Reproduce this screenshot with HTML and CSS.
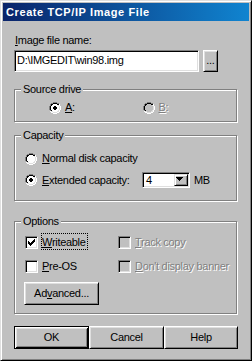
FILE: index.html
```html
<!DOCTYPE html>
<html lang="en">

<head>
    <meta charset="UTF-8">
    <meta name="viewport" content="width=device-width, initial-scale=1.0">
    <title>Create TCP/IP Image File</title>
    <link rel="stylesheet" href="styles.css">
</head>

<body>
    <!-- Pixel sprites for the classic radio / check glyphs -->
    <svg class="sprites" width="0" height="0">
        <symbol id="radio" viewBox="0 0 12 12">
            <path fill="#808080" d="M4 0h4v1H4zM2 1h2v1H2zM8 1h2v1H8zM1 2h1v2H1zM0 4h1v4H0zM1 8h1v1H1z" />
            <path fill="#000" d="M4 1h4v1H4zM2 2h2v1H2zM8 2h2v1H8zM2 3h1v1H2zM1 4h1v4H1zM2 8h1v1H2z" />
            <path fill="#dfdfdf" d="M9 3h1v1H9zM10 4h1v4h-1zM9 8h1v1H9zM2 9h2v1H2zM8 9h2v1H8zM4 10h4v1H4z" />
            <path fill="#fff" d="M10 2h1v2h-1zM11 4h1v4h-1zM10 8h1v2h-1zM1 9h1v1H1zM2 10h2v1H2zM8 10h2v1H8zM4 11h4v1H4z" />
            <path d="M4 2h4v1h1v1h1v4h-1v1h-1v1H4v-1H3V8H2V4h1V3h1z" />
        </symbol>
        <symbol id="dot" viewBox="0 0 12 12">
            <path fill="#000" d="M5 4h2v1h1v2h-1v1H5V7H4V5h1z" />
        </symbol>
        <symbol id="check" viewBox="0 0 7 7">
            <path fill="#000" d="M6 0h1v1H6zM5 1h2v1H5zM0 2h1v1H0zM4 2h3v1H4zM0 3h2v1H0zM3 3h3v1H3zM0 4h5v1H0zM1 5h3v1H1zM2 6h1v1H2z" />
        </symbol>
    </svg>

    <div class="window">
        <div class="titlebar">Create TCP/IP Image File</div>

        <div class="client">
            <div class="label"><u>I</u>mage file name:</div>
            <div class="file-row">
                <div class="field">D:\IMGEDIT\win98.img</div>
                <div class="btn browse">...</div>
            </div>

            <fieldset class="group source">
                <legend>Source drive</legend>
                <div class="drives">
                    <div class="choice drive">
                        <svg class="radio-ico" viewBox="0 0 12 12"><use href="#radio" /><use href="#dot" /></svg>
                        <span><u>A</u>:</span>
                    </div>
                    <div class="choice drive disabled">
                        <svg class="radio-ico" viewBox="0 0 12 12"><use href="#radio" /></svg>
                        <span><u>B</u>:</span>
                    </div>
                </div>
            </fieldset>

            <fieldset class="group capacity">
                <legend>Capacity</legend>
                <div class="choice indent">
                    <svg class="radio-ico" viewBox="0 0 12 12"><use href="#radio" /></svg>
                    <span><u>N</u>ormal disk capacity</span>
                </div>
                <div class="choice indent extended">
                    <svg class="radio-ico" viewBox="0 0 12 12"><use href="#radio" /><use href="#dot" /></svg>
                    <span class="ext-label"><u>E</u>xtended capacity:</span>
                    <div class="combo">
                        <span class="combo-value">4</span>
                        <span class="combo-arrow">
                            <svg width="7" height="4" viewBox="0 0 7 4"><path fill="#000" d="M0 0h7v1h-1v1h-1v1h-1v1h-1v-1h-1v-1h-1v-1H0z" /></svg>
                        </span>
                    </div>
                    <span class="unit">MB</span>
                </div>
            </fieldset>

            <fieldset class="group options">
                <legend>Options</legend>
                <div class="opt-row">
                    <div class="choice check-item">
                        <span class="box"><svg viewBox="0 0 7 7"><use href="#check" /></svg></span>
                        <span class="focus"><u>W</u>riteable</span>
                    </div>
                    <div class="choice check-item disabled">
                        <span class="box"></span>
                        <span><u>T</u>rack copy</span>
                    </div>
                </div>
                <div class="opt-row second">
                    <div class="choice check-item">
                        <span class="box"></span>
                        <span><u>P</u>re-OS</span>
                    </div>
                    <div class="choice check-item disabled">
                        <span class="box"></span>
                        <span><u>D</u>on't display banner</span>
                    </div>
                </div>
                <div class="btn advanced">Ad<u>v</u>anced...</div>
            </fieldset>

            <div class="actions">
                <div class="btn default">OK</div>
                <div class="btn">Cancel</div>
                <div class="btn">Help</div>
            </div>
        </div>
    </div>
</body>

</html>
```

FILE: styles.css
```css
/* Reset */
* {
    box-sizing: border-box;
}

body {
    margin: 0;
    background-color: #c0c0c0;
    color: #000;
    font-family: "Liberation Sans", Arial, sans-serif;
    font-size: 11px;
    line-height: 13px;
    letter-spacing: -0.3px;
}

.sprites {
    display: block;
    width: 0;
    height: 0;
    overflow: hidden;
}

/* Dialog frame */
.window {
    width: 252px;
    height: 361px;
    padding: 2px;
    border: 1px solid;
    border-color: #dfdfdf #000 #000 #dfdfdf;
    box-shadow: inset 1px 1px #fff, inset -1px -1px #808080;
}

.titlebar {
    height: 18px;
    padding-left: 3px;
    display: flex;
    align-items: center;
    background: linear-gradient(90deg, #0a246a, #1084d0);
    color: #fff;
    font-weight: bold;
    letter-spacing: 0.6px;
}

.client {
    padding: 0 11px;
}

.label {
    margin-top: 13px;
    padding-left: 1px;
}

/* File name row */
.file-row {
    display: flex;
    gap: 4px;
    height: 22px;
    margin-top: 3px;
}

.field {
    width: 185px;
    padding: 1px 0 0 2px;
    line-height: 16px;
    background-color: #fff;
    border: 1px solid;
    border-color: #808080 #fff #fff #808080;
    box-shadow: inset 1px 1px #000, inset -1px -1px #dfdfdf;
}

/* Raised push button */
.btn {
    display: flex;
    justify-content: center;
    align-items: center;
    background-color: #c0c0c0;
    border: 1px solid;
    border-color: #fff #000 #000 #fff;
    box-shadow: inset 1px 1px #dfdfdf, inset -1px -1px #808080;
}

.browse {
    width: 15px;
    align-items: flex-end;
    padding-bottom: 4px;
}

/* Group boxes */
.group {
    margin: 0 1px 0 0;
    min-width: 0;
    border: 1px solid #808080;
    box-shadow: inset 1px 1px #fff, 1px 1px #fff;
}

.group legend {
    padding: 0 2px;
    line-height: 13px;
    background-color: #c0c0c0;
}

.source {
    margin-top: 11px;
    padding: 5px 0 7px 6px;
}

.capacity {
    margin-top: 7px;
    padding: 10px 0 12px 6px;
}

.options {
    margin-top: 14px;
    padding: 8px 0 8px 6px;
}

.choice {
    display: flex;
    align-items: center;
    gap: 5px;
    height: 13px;
}

.drives {
    display: flex;
    padding-left: 28px;
}

.drive {
    width: 105px;
    gap: 4px;
}

.indent {
    margin-left: 4px;
}

.extended {
    height: 16px;
    margin-top: 7px;
}

.ext-label {
    width: 100px;
}

.radio-ico {
    display: block;
    flex: none;
    width: 12px;
    height: 12px;
    fill: #fff;
}

.disabled {
    color: #808080;
    text-shadow: 1px 1px 0 #fff;
}

.disabled .radio-ico {
    fill: #c0c0c0;
}

/* Drop-down list */
.combo {
    display: flex;
    width: 48px;
    height: 16px;
    margin-left: -5px;
    padding: 1px;
    background-color: #fff;
    border: 1px solid;
    border-color: #808080 #fff #fff #808080;
    box-shadow: inset 1px 1px #000, inset -1px -1px #dfdfdf;
}

.combo-value {
    flex: 1;
    padding-left: 2px;
    line-height: 12px;
}

.combo-arrow {
    display: block;
    width: 14px;
    height: 12px;
    padding: 2px 0 0 1px;
    background-color: #c0c0c0;
    border: 1px solid;
    border-color: #dfdfdf #000 #000 #dfdfdf;
    box-shadow: inset 1px 1px #fff, inset -1px -1px #808080;
}

.combo-arrow svg {
    display: block;
}

.unit {
    margin-left: -1px;
}

/* Check boxes */
.opt-row {
    display: flex;
    margin-left: 4px;
}

.opt-row.second {
    margin-top: 11px;
}

.check-item {
    gap: 4px;
}

.check-item:first-child {
    width: 93px;
}

.box {
    display: block;
    flex: none;
    width: 13px;
    height: 13px;
    padding: 2px;
    background-color: #fff;
    border: 1px solid;
    border-color: #808080 #fff #fff #808080;
    box-shadow: inset 1px 1px #000, inset -1px -1px #dfdfdf;
}

.box svg {
    display: block;
    width: 7px;
    height: 7px;
}

.disabled .box {
    background-color: #c0c0c0;
}

.focus {
    margin: -3px -2px -1px -1px;
    padding: 2px 1px 0 0;
    border: 1px dotted #000;
}

.advanced {
    width: 75px;
    height: 23px;
    margin: 9px 0 0 3px;
}

/* Dialog buttons */
.actions {
    display: flex;
    margin-top: 12px;
}

.actions .btn {
    width: 75px;
    height: 23px;
    padding-bottom: 1px;
}

.actions .btn:last-child {
    width: 74px;
}

.btn.default {
    border-color: #000;
    box-shadow: inset 1px 1px #fff, inset -1px -1px #000, inset 2px 2px #dfdfdf, inset -2px -2px #808080;
}
```
